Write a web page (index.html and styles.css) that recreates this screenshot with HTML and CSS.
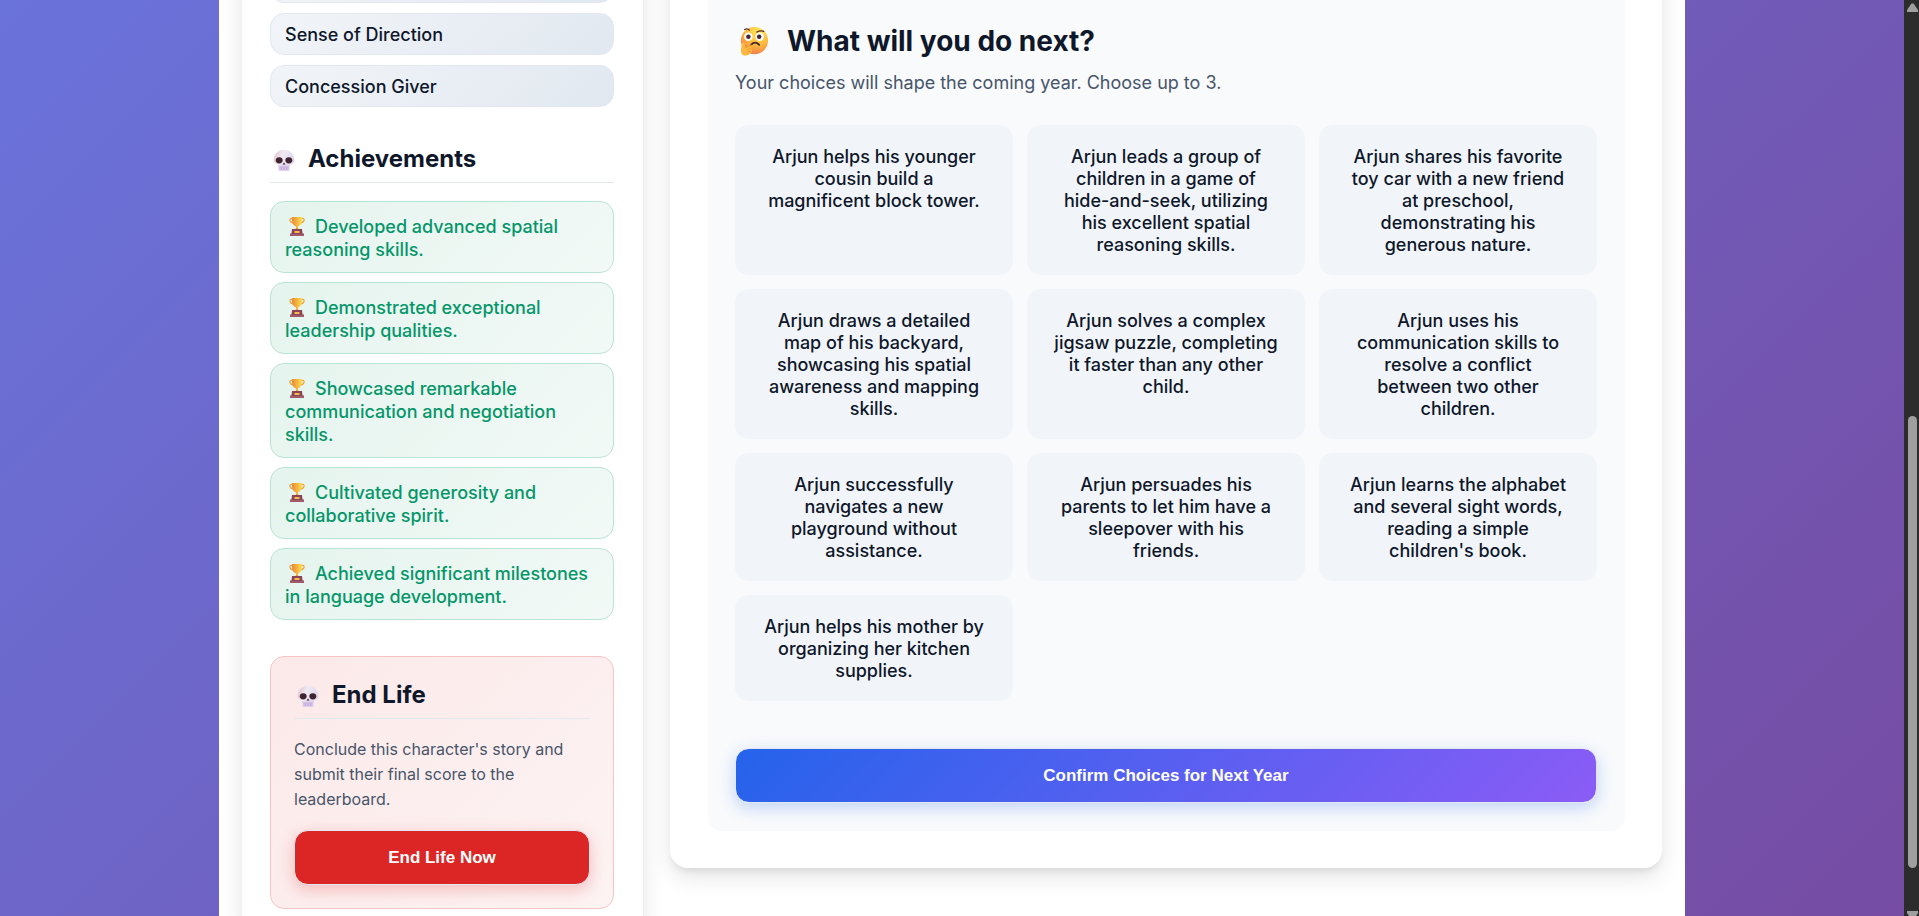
FILE: index.html
```html
<!DOCTYPE html>
<html lang="en">
<head>
<meta charset="utf-8">
<meta name="viewport" content="width=device-width, initial-scale=1">
<title>Life Story</title>
<link rel="stylesheet" href="styles.css">
</head>
<body>
<svg class="sprite" aria-hidden="true">
  <defs>
    <linearGradient id="bone" x1="0" y1="0.3" x2="1" y2="0.6">
      <stop offset="0" stop-color="#e0c6d0"/><stop offset="0.4" stop-color="#efeaf2"/><stop offset="1" stop-color="#e0d5ee"/>
    </linearGradient>
    <linearGradient id="jaw" x1="0" y1="0" x2="0" y2="1">
      <stop offset="0" stop-color="#d3bde6"/><stop offset="1" stop-color="#dac8ee"/>
    </linearGradient>
    <linearGradient id="gold" x1="0" y1="0" x2="1" y2="0">
      <stop offset="0" stop-color="#e8893a"/><stop offset="0.55" stop-color="#f8b83f"/><stop offset="1" stop-color="#fbe25a"/>
    </linearGradient>
    <radialGradient id="face" cx="0.65" cy="0.2" r="0.9">
      <stop offset="0" stop-color="#ffe85a"/><stop offset="0.5" stop-color="#fdbb3c"/><stop offset="1" stop-color="#f0734f"/>
    </radialGradient>
    <symbol id="skull" viewBox="0 0 32 32">
      <path fill="url(#jaw)" d="M8 20h16v9q0 3-2 3t-2-1.500q-.8 1.500-2 1.500t-2-1.500q-.8 1.500-2 1.500t-2-1.500q-.8 1.500-2 1.500-2 0-2-3z"/>
      <path fill="url(#bone)" d="M16 1C8 1 1 7 1 15c0 3 .3 4 1 5 1 2 4 2 5 3l2 1h14l2-1c1-1 4-1 5-3 .7-1 1-2 1-5C31 7 24 1 16 1z"/>
      <path stroke="#b193ca" stroke-width="1" d="M12 26v5M16 26v5M20 26v5"/>
      <ellipse cx="9" cy="16.500" rx="5" ry="4.500" fill="#3d2430"/>
      <ellipse cx="23" cy="16.500" rx="5" ry="4.500" fill="#3d2430"/>
      <path fill="#3d2430" d="M16 19.500l-2.200 3.200h4.400z"/>
    </symbol>
    <symbol id="trophy" viewBox="0 0 32 38">
      <path fill="none" stroke="#f0a03a" stroke-width="2.400" d="M8 5C4 1 1 3 2 7c1 3 4 5 8 5M24 5c4-4 7-2 6 2-1 3-4 5-8 5"/>
      <path fill="url(#gold)" d="M6 0h20c1 12-3 17-8 19v6h-4v-6C9 17 5 12 6 0z"/>
      <path fill="#e58a35" d="M10 25q6-4 12 0z"/>
      <path fill="#8b4557" d="M6 24h20l1 9h3v5H2v-5h3z"/>
      <path fill="#a05a6b" d="M2 34h28v4H2z"/>
      <rect x="11" y="28" width="10" height="4" rx="1" fill="#f6bd4a"/>
    </symbol>
    <symbol id="thinking" viewBox="0 0 32 32">
      <circle cx="16.500" cy="15.500" r="14.500" fill="url(#face)"/>
      <circle cx="10" cy="11.500" r="4.500" fill="#fff"/><circle cx="22" cy="11.500" r="4.500" fill="#fff"/>
      <circle cx="10" cy="11.500" r="2.400" fill="#44242f"/><circle cx="21.500" cy="11.500" r="2.400" fill="#44242f"/>
      <path fill="none" stroke="#5b2f2c" stroke-width="1.300" stroke-linecap="round" d="M6 3.800q3-2 5 .7M19 6.500q4-2 7.500-.8"/>
      <path fill="none" stroke="#4c2830" stroke-width="1.900" stroke-linecap="round" d="M13 20q4-4.500 8.500 0"/>
      <path fill="#fdb840" d="M3 19c0-2 2.600-2 3 0l.8 4L13 20.500c2-.6 2.600 1.300 1 2l-2.500 1.200c3-.4 3.600 1.800 1.700 2.500 1.200 1 .2 2.500-1 2.600-1 2-4 3-6.200 2.700-3-.4-4-2.500-4-5.300z"/>
      <path fill="none" stroke="#e48a30" stroke-width=".8" stroke-linecap="round" d="M7 23l6-2.300M9 25l3-.8M9.500 27.500l3-.6"/>
    </symbol>
  </defs>
</svg>

<div class="viewport">
  <div class="shell">
    <aside class="card sidebar">
      <ul class="traits">
        <li class="trait"></li>
        <li class="trait">Sense of Direction</li>
        <li class="trait">Concession Giver</li>
      </ul>

      <section class="achievements">
        <h3 class="side-title"><svg class="skull"><use href="#skull"/></svg>Achievements</h3>
        <ul class="achievement-list">
          <li class="achievement"><svg class="trophy"><use href="#trophy"/></svg>Developed advanced spatial reasoning skills.</li>
          <li class="achievement"><svg class="trophy"><use href="#trophy"/></svg>Demonstrated exceptional leadership qualities.</li>
          <li class="achievement"><svg class="trophy"><use href="#trophy"/></svg>Showcased remarkable communication and negotiation skills.</li>
          <li class="achievement"><svg class="trophy"><use href="#trophy"/></svg>Cultivated generosity and collaborative spirit.</li>
          <li class="achievement"><svg class="trophy"><use href="#trophy"/></svg>Achieved significant milestones in language development.</li>
        </ul>
      </section>

      <section class="end-life">
        <h3 class="side-title"><svg class="skull"><use href="#skull"/></svg>End Life</h3>
        <p class="end-text">Conclude this character's story and submit their final score to the leaderboard.</p>
        <button class="action danger" type="button">End Life Now</button>
      </section>
    </aside>

    <main class="card content">
      <section class="panel">
        <h2 class="panel-title"><svg class="thinking"><use href="#thinking"/></svg>What will you do next?</h2>
        <p class="panel-text">Your choices will shape the coming year. Choose up to 3.</p>
        <div class="choices">
          <button class="choice" type="button">Arjun helps his younger cousin build a magnificent block tower.</button>
          <button class="choice" type="button">Arjun leads a group of children in a game of hide-and-seek, utilizing his excellent spatial reasoning skills.</button>
          <button class="choice" type="button">Arjun shares his favorite toy car with a new friend at preschool, demonstrating his generous nature.</button>
          <button class="choice" type="button">Arjun draws a detailed map of his backyard, showcasing his spatial awareness and mapping skills.</button>
          <button class="choice" type="button">Arjun solves a complex jigsaw puzzle, completing it faster than any other child.</button>
          <button class="choice" type="button">Arjun uses his communication skills to resolve a conflict between two other children.</button>
          <button class="choice" type="button">Arjun successfully navigates a new playground without assistance.</button>
          <button class="choice" type="button">Arjun persuades his parents to let him have a sleepover with his friends.</button>
          <button class="choice" type="button">Arjun learns the alphabet and several sight words, reading a simple children's book.</button>
          <button class="choice" type="button">Arjun helps his mother by organizing her kitchen supplies.</button>
        </div>
        <button class="action primary" type="button">Confirm Choices for Next Year</button>
      </section>
    </main>
  </div>
</div>

<div class="scrollbar" aria-hidden="true">
  <svg class="arrow" viewBox="0 0 11 9"><path d="M4.500.5h2L11 7v2H0V7z"/></svg>
  <div class="track"><div class="thumb"></div></div>
  <svg class="arrow arrow-down" viewBox="0 0 11 9"><path d="M4.500 8.500h2L11 2V0H0v2z"/></svg>
</div>
</body>
</html>
```

FILE: styles.css
```css
* { box-sizing: border-box; }

body {
  margin: 0;
  height: 100vh;
  display: flex;
  overflow: hidden;
  font-family: Inter, "Liberation Sans", sans-serif;
  color: #0f172a;
}

h2, h3, p, ul { margin: 0; padding: 0; }
ul { list-style: none; }

.sprite { position: absolute; width: 0; height: 0; }

.viewport {
  flex: 1;
  min-width: 0;
  overflow: hidden;
  background: linear-gradient(135deg, #667eea 0%, #764ba2 100%) 0 -813px / 100% 1796px no-repeat;
}

/* The page is scrolled part of the way down. */
.shell {
  max-width: 1466px;
  margin: -91px auto 0;
  padding: 24px 23px 48px;
  display: grid;
  grid-template-columns: minmax(280px, 401px) 1fr;
  align-items: start;
  gap: 27px;
  background: #fff;
}

.card {
  background: #fff;
  border-radius: 18px;
  box-shadow: 0 9px 23px rgba(0, 0, 0, .1), 0 6px 8px -4px rgba(0, 0, 0, .1);
}

.sidebar { padding: 28px 29px 28px 28px; }

.traits { display: grid; gap: 10px; }

.trait {
  min-height: 42px;
  padding: 10px 14px 8px;
  border: 1px solid #e2e8f0;
  border-radius: 14px;
  background: linear-gradient(135deg, #f1f5f9, #e2e8f0);
  font-size: 18px;
  line-height: 22px;
  font-weight: 500;
}

.achievements { margin-top: 36px; }

.side-title {
  display: flex;
  align-items: center;
  padding-bottom: 8px;
  margin-bottom: 18px;
  border-bottom: 1px solid #e2e8f0;
  font-size: 24px;
  line-height: 31px;
  font-weight: 700;
}

.skull { width: 22px; height: 22px; margin: 2px 13px 0 3px; }

.achievement-list { display: grid; gap: 9px; }

.achievement {
  padding: 13px 14px 11px;
  border: 1px solid #b9e3d3;
  border-radius: 14px;
  background: linear-gradient(135deg, #e5f4ee, #f2f9f6);
  color: #059669;
  font-size: 18px;
  line-height: 23px;
  font-weight: 500;
}

.trophy { width: 16px; height: 19px; margin: 0 10px 0 4px; vertical-align: -3px; }

.end-life {
  margin-top: 36px;
  padding: 22px 23px 23px;
  border: 1px solid #f6c4c4;
  border-radius: 14px;
  background: linear-gradient(135deg, #fce9e9, #fdf3f3);
}

.end-text {
  margin-bottom: 18px;
  color: #475569;
  font-size: 16px;
  line-height: 25px;
}

.action {
  display: block;
  width: 100%;
  padding: 17px;
  border: 1px solid #e2e8f0;
  border-radius: 14px;
  color: #fff;
  font-family: "Liberation Sans", Arial, sans-serif;
  font-size: 17px;
  line-height: 19px;
  font-weight: 700;
}

.danger {
  background: #dc2626;
  box-shadow: 0 5px 16px rgba(220, 38, 38, .25);
}

.primary {
  margin-top: 47px;
  background: linear-gradient(135deg, #2563eb, #8b5cf6);
  box-shadow: 0 5px 16px rgba(37, 99, 235, .25);
}

.content { padding: 37px 37px 37px 38px; }

.panel {
  padding: 51px 28px 28px 27px;
  border-radius: 14px;
  background: #f8fafc;
}

.panel-title {
  display: flex;
  align-items: center;
  font-size: 28px;
  line-height: 40px;
  font-weight: 700;
}

.thinking { width: 30px; height: 30px; margin: 0 18px 0 4px; }

.panel-text {
  margin: 7px 0 28px;
  color: #475569;
  font-size: 18px;
  line-height: 29px;
}

.choices {
  display: grid;
  grid-template-columns: repeat(3, 1fr);
  gap: 14px;
}

.choice {
  display: flex;
  align-items: flex-start;
  justify-content: center;
  padding: 21px 27px 19px;
  border: 0;
  border-radius: 14px;
  background: #f1f5f9;
  color: #0f172a;
  font-family: inherit;
  font-size: 18px;
  line-height: 22px;
  font-weight: 500;
  text-align: center;
}

.scrollbar {
  width: 15px;
  display: flex;
  flex-direction: column;
  align-items: center;
  padding: 3px 0 0 2px;
  background: #2c2c2c;
}

.arrow { width: 11px; height: 9px; flex: none; fill: #9f9f9f; }
.arrow-down { margin-bottom: -4px; }

.track { flex: 1; display: flex; flex-direction: column; padding-bottom: 43px; }

.thumb { width: 9px; height: 452px; margin-top: auto; border-radius: 5px; background: #9f9f9f; }
```
